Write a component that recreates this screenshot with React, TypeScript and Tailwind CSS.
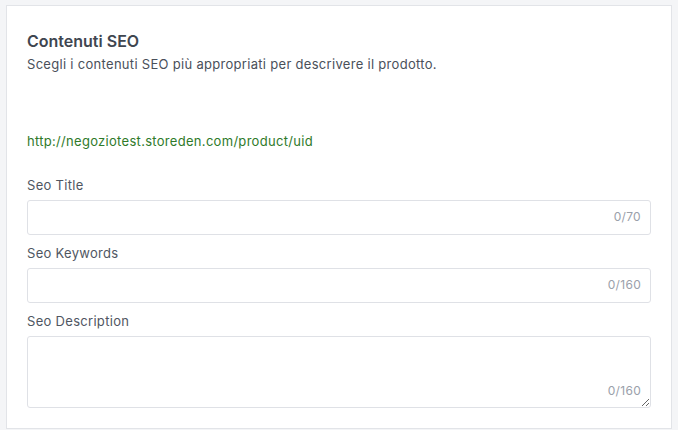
import React from 'react';

const font = { fontFamily: 'Inter, "Noto Sans", sans-serif' };

const Field = ({ label, max, area }: { label: string; max: number; area?: boolean }) => {
  return (
    <div className="flex flex-col">
      <label className="text-[13px] leading-[18px] tracking-[0.3px] text-[#4f5662] mb-[6px]">{label}</label>
      <div className="relative">
        {area ? (
          <textarea className="block w-full h-[72px] rounded-[3px] border border-[#dfe1e6] bg-white outline-none" />
        ) : (
          <input className="block w-full h-[35px] rounded-[3px] border border-[#dfe1e6] bg-white outline-none" />
        )}
        <span
          className={`absolute right-[10px] text-[12px] leading-[16px] tracking-[0.3px] text-[#9aa0aa] ${
            area ? 'bottom-[9px]' : 'top-[9px]'
          }`}
        >
          0/{max}
        </span>
      </div>
    </div>
  );
};

export default function App() {
  return (
    <div className="min-h-[430px] bg-[#f4f5f7] pt-[5px] px-[6px]" style={font}>
      <div className="bg-white border border-[#e2e4e8] px-5 pt-[25px] pb-5">
        {/* Header */}
        <h2 className="text-[16px] leading-[20px] font-semibold text-[#3f4650]">Contenuti SEO</h2>
        <p className="mt-[4px] text-[13px] leading-[18px] tracking-[0.3px] text-[#4a505a]">
          Scegli i contenuti SEO più appropriati per descrivere il prodotto.
        </p>

        <p className="mt-[59px] text-[13px] leading-[18px] tracking-[0.3px] text-[#2f7a2a]">
          http://negoziotest.storeden.com/product/uid
        </p>

        <div className="mt-[26px] flex flex-col gap-[9px]">
          <Field label="Seo Title" max={70} />
          <Field label="Seo Keywords" max={160} />
          <Field label="Seo Description" max={160} area />
        </div>
      </div>
    </div>
  );
}
